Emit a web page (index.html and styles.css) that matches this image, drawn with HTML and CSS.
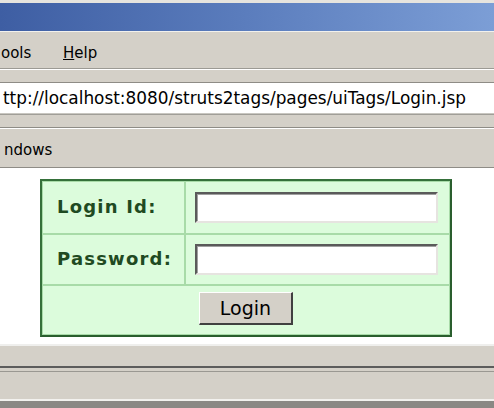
FILE: index.html
```html
<!DOCTYPE html>
<html>
<head>
<meta charset="utf-8">
<title>Login</title>
<link rel="stylesheet" href="styles.css">
</head>
<body>
<div class="window">
  <div class="frame-top"></div>
  <div class="titlebar"></div>
  <div class="menubar">
    <span class="menu menu-tools">ools</span>
    <span class="menu"><u>H</u>elp</span>
  </div>
  <div class="strip strip-a"></div>
  <div class="address">ttp://localhost:8080/struts2tags/pages/uiTags/Login.jsp</div>
  <div class="strip strip-b"></div>
  <div class="links">ndows</div>
  <div class="content">
    <form class="login-form">
      <table class="login-table">
        <tr class="row-id">
          <td class="label">Login Id:</td>
          <td class="field"><input class="text-input" type="text"></td>
        </tr>
        <tr class="row-pw">
          <td class="label">Password:</td>
          <td class="field"><input class="text-input" type="password"></td>
        </tr>
        <tr class="row-btn">
          <td class="actions" colspan="2"><button class="login-btn" type="button">Login</button></td>
        </tr>
      </table>
    </form>
  </div>
  <div class="status status-a"></div>
  <div class="status status-b"></div>
</div>
</body>
</html>
```
FILE: styles.css
```css
* { box-sizing: border-box; }
html, body { margin: 0; padding: 0; background: #ffffff; }
body {
  width: 494px;
  height: 408px;
  overflow: hidden;
  font-family: "DejaVu Sans", Verdana, sans-serif;
}
.window { width: 494px; }
.frame-top { height: 3px; background: #e6e4de; }
.titlebar {
  height: 28px;
  background: linear-gradient(to right, #3e5ea3 0%, #5b7dbd 50%, #7c9ed6 100%);
}
.menubar {
  height: 38px;
  padding-top: 5px;
  background: #d4d0c8;
  border-top: 1px solid #f2f1ed;
  border-bottom: 1px solid #9c9a94;
  display: flex;
  align-items: center;
  font-size: 15px;
  color: #000;
  white-space: nowrap;
}
.menu-tools { width: 63px; padding-left: 1px; }
.strip {
  background: #d4d0c8;
  border-top: 1px solid #ffffff;
  border-bottom: 1px solid #8e8c86;
}
.strip-a { height: 14px; }
.strip-b { height: 14px; border-top: 1px solid #a09e98; }
.address {
  height: 31px;
  padding-left: 3px;
  background: #ffffff;
  font-size: 16.9px;
  display: flex;
  align-items: center;
  white-space: nowrap;
  border-bottom: 1px solid #c8c6c0;
}
.links {
  height: 40px;
  padding: 4px 0 0 4px;
  background: #d4d0c8;
  border-top: 1px solid #ffffff;
  border-bottom: 1px solid #8e8c86;
  font-size: 15px;
  display: flex;
  align-items: center;
  white-space: nowrap;
}
.content {
  height: 176px;
  padding: 11px 0 0 40px;
}
.login-form { margin: 0; }
.login-table {
  width: 412px;
  height: 158px;
  border-collapse: separate;
  border-spacing: 0;
  background: #dcfcdc;
  border: 2px solid #35703a;
  border-right-color: #2a5e2e;
  border-bottom-color: #2a5e2e;
  box-shadow: inset 0 0 0 1px #8fcc8f;
}
.login-table td {
  border: 1px solid #a8dba8;
  padding: 0;
}
.row-id td { height: 53px; }
.row-pw td { height: 51px; }
.row-btn td { height: 50px; }
.label {
  width: 143px;
  padding: 0 0 3px 14px !important;
  font-weight: bold;
  font-size: 18px;
  letter-spacing: 1.2px;
  color: #1f4a22;
  white-space: nowrap;
}
.field { padding-left: 9px !important; }
.text-input {
  display: block;
  width: 243px;
  height: 31px;
  margin: 0;
  background: #ffffff;
  border-style: solid;
  border-width: 2px;
  border-color: #5a5a5a #e6e4e0 #e6e4e0 #5a5a5a;
  box-shadow: inset 1px 1px 0 #a0a0a0;
  outline: none;
}
.actions { text-align: center; }
.login-btn {
  width: 94px;
  height: 33px;
  margin: 0 0 3px 0;
  background: #d4d0c8;
  font-family: "DejaVu Sans", Tahoma, sans-serif;
  font-size: 19px;
  color: #000;
  border-style: solid;
  border-width: 1px 2px 2px 1px;
  border-color: #ffffff #404040 #404040 #ffffff;
  padding: 0;
}
.status { background: #d4d0c8; }
.status-a {
  height: 24px;
  border-top: 2px solid #efefed;
  border-bottom: 2px solid #5c5c5c;
}
.status-b {
  height: 40px;
  background: linear-gradient(to bottom,
    #d4d0c8 0px, #d4d0c8 3px,
    #9a9892 3px, #9a9892 4px,
    #d4d0c8 4px, #d4d0c8 31px,
    #f2f1ee 31px, #f2f1ee 33px,
    #8a8884 33px, #8a8884 40px);
}
```
